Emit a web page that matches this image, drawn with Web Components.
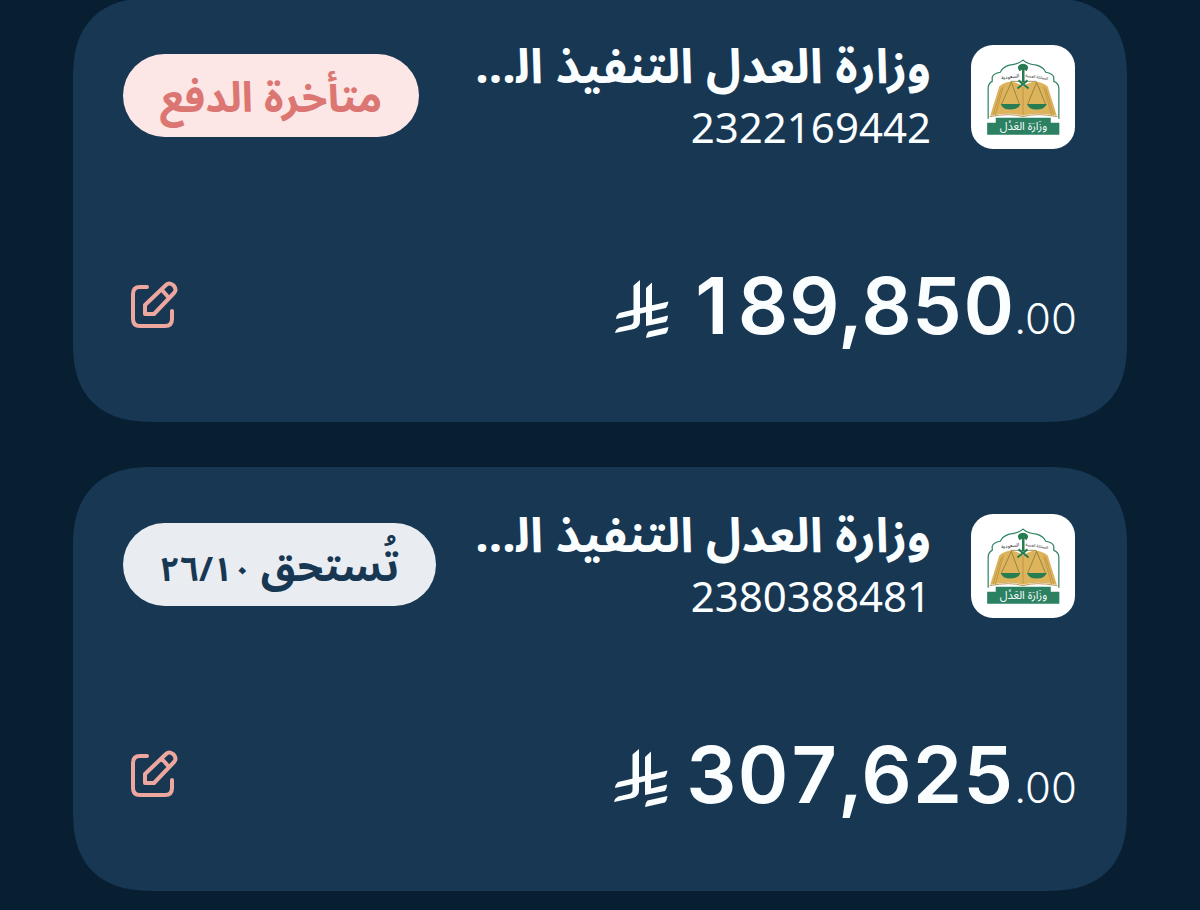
<!DOCTYPE html>
<html lang="ar" dir="rtl">
<head>
<meta charset="utf-8">
<meta name="viewport" content="width=device-width, initial-scale=1">
<title>الفواتير</title>
<style>
  body {
    margin: 0;
    background: #081f32;
    color: #fbfeff;
    font-family: "Noto Sans", "Noto Sans Arabic", "DejaVu Sans", sans-serif;
  }
  .date { font-size: 34px; }
  /* plain figure one, kept to the width of the other figures */
  .one { display: inline-block; width: 51px; text-align: center; font-variant-numeric: normal; }
</style>
</head>
<body>
<bill-list>
  <bill-card>
    <ministry-logo slot="logo"></ministry-logo>
    <span slot="name">وزارة العدل التنفيذ ال&zwj;...</span>
    <span slot="number">2322169442</span>
    <status-pill slot="status" kind="late">متأخرة الدفع</status-pill>
    <money-amount slot="amount"><span class="one">1</span>89,850<span slot="cents">.00</span></money-amount>
  </bill-card>
  <bill-card>
    <ministry-logo slot="logo"></ministry-logo>
    <span slot="name">وزارة العدل التنفيذ ال&zwj;...</span>
    <span slot="number">2380388481</span>
    <status-pill slot="status" kind="due">تُستحق<span class="date"> ٢٦/١٠</span></status-pill>
    <money-amount slot="amount">307,625<span slot="cents">.00</span></money-amount>
  </bill-card>
</bill-list>

<script>
const define = (name, html) => customElements.define(name, class extends HTMLElement {
  constructor() {
    super();
    const t = document.createElement('template');
    t.innerHTML = html;
    this.attachShadow({ mode: 'open' }).append(t.content.cloneNode(true));
  }
});

define('bill-list', `
<style>
  :host { display: block; overflow: hidden; }
  main { display: flex; flex-direction: column; gap: 45px; margin-top: -2px; padding: 0 73px 19px; }
</style>
<main><slot></slot></main>`);

define('bill-card', `
<style>
  :host { display: block; }
  article {
    display: flex; flex-direction: column; justify-content: space-between;
    box-sizing: border-box; min-height: 424px;
    padding: 36px 50px 55px;
    background: #173753; border-radius: 80px; corner-shape: superellipse(1.3);
  }
  header { display: flex; align-items: flex-start; }
  .who { flex: 1; min-width: 0; padding-inline-start: 40px; }
  .logo { padding-top: 11px; padding-inline-start: 2px; }
  .status { padding-top: 20px; }
  h2, p { margin: 0; white-space: nowrap; }
  h2 { font-size: 48px; line-height: 62px; font-weight: 700; }
  p { margin-top: 3px; font-size: 42px; line-height: 56px; }
  footer { display: flex; align-items: flex-start; justify-content: space-between; }
  button { display: flex; margin: 16px 0 0; padding: 4px 5px; border: 0; background: none; color: #eda79f; cursor: pointer; }
</style>
<article>
  <header>
    <div class="logo"><slot name="logo"></slot></div>
    <div class="who"><h2><slot name="name"></slot></h2><p><slot name="number"></slot></p></div>
    <div class="status"><slot name="status"></slot></div>
  </header>
  <footer>
    <slot name="amount"></slot>
    <button type="button" aria-label="تعديل">
      <svg width="56" height="56" viewBox="0 0 56 56" fill="none" stroke="currentColor" stroke-width="4" stroke-linecap="round" stroke-linejoin="round">
        <path d="M19 10H12Q5 10 5 17V42Q5 49 12 49H37Q44 49 44 42V34"/>
        <path d="M17 37V28L38 8Q41 5 45 8L46 9Q49 13 46 16L26 37ZM34 13L41 21"/>
      </svg>
    </button>
  </footer>
</article>`);

define('status-pill', `
<style>
  :host {
    display: block; box-sizing: border-box; height: 83px; padding: 0 37px;
    border-radius: 42px; font-size: 42px; font-weight: 700; line-height: 84px; white-space: nowrap;
  }
  :host([kind=late]) { background: #fce7e6; color: #db7672; }
  :host([kind=due]) { background: #e9edf1; color: #173753; }
</style>
<slot></slot>`);

define('money-amount', `
<style>
  :host { display: flex; direction: ltr; align-items: baseline; font-family: Inter, sans-serif; line-height: 96px; }
  svg { width: 54px; height: 60px; margin: 0 18px 6px 0; align-self: center; }
  .whole { font-size: 79px; font-weight: 600; font-variant-numeric: tabular-nums; font-kerning: none; }
  .cents { font-size: 42px; font-weight: 300; }
</style>
<svg viewBox="0 0 54 60" fill="currentColor" role="img" aria-label="ريال سعودي">
  <path d="M18.500 6.500L25 1V42Q25 48 19 50L0 54Q1 50 4 48.500L15 46Q18.500 45 18.500 42Z"/>
  <path d="M31 9L37 3.500V40.500L53 36.500Q53 40 51 43L31 47Z"/>
  <path d="M4 34L53.500 22.500Q53 26 51 29L1 40Q1.500 36 4 34Z"/>
  <path d="M33.500 52.500L53.500 48Q53 52 51 54.500L31 59Q31 55 33.500 52.500Z"/>
</svg>
<span class="whole"><slot></slot></span><span class="cents"><slot name="cents"></slot></span>`);

define('ministry-logo', `
<style>
  :host { display: block; width: 104px; height: 104px; }
  svg { display: block; width: 100%; height: 100%; background: #fff; border-radius: 22px; direction: rtl; }
  text { font-family: "Noto Sans Arabic", "DejaVu Sans", sans-serif; text-anchor: middle; }
</style>
<svg viewBox="0 0 103 103" role="img">
  <path d="M17 73V43Q17 38 21 36V32Q22 28 29 27Q31 22 38 20Q47 19 51.500 15Q56 19 65 20Q72 22 74 27Q81 28 82 32V36Q87 38 87 43V73" fill="none" stroke="#2d8260" stroke-width="1.200"/>
  <path d="M19 70L28 41Q39 32 51.500 41Q64 32 76 41L85 70Q64 66 51.500 70Q39 66 19 70Z" fill="#ddb45c"/>
  <path d="M22 69L30 43M24 70L32 41M82 69L74 43M80 70L72 41M51.500 41V69" fill="none" stroke="#b58a3c" stroke-width=".7"/>
  <path d="M18.500 71Q39 67 51.500 71Q64 67 85.500 71" fill="none" stroke="#a9803a" stroke-width=".8"/>
  <text transform="translate(65 33) rotate(8)" font-size="4" fill="#222">المملكة العربية</text>
  <text transform="translate(39 33) rotate(-8)" font-size="5" fill="#222">السعودية</text>
  <path d="M39 36H65M40 37L30 59M40 37L48 59M65 37L56 59M65 37L74 59" fill="none" stroke="#8a7a3a" stroke-width=".8"/>
  <path d="M29.500 58.500H49Q47 64 39 64Q31 64 29.500 58.500ZM55.500 58.500H75Q73 64 65 64Q57 64 55.500 58.500Z" fill="#277d51"/>
  <path d="M46.500 23Q46 19 51.500 18.500Q57 19 56.500 23L55 26L53 24.500V37H50.500V24.500L48 26Z" fill="#277d51"/>
  <path d="M46 43L56 35M57 43L47 35" stroke="#277d51" stroke-width="2"/>
  <path d="M16 89V77H24.500V72H79V77H87.500V89Z" fill="#2b8162"/>
  <text x="52" y="84" font-size="11" fill="#fff">وزَارَة العَدْل</text>
</svg>`);
</script>
</body>
</html>
